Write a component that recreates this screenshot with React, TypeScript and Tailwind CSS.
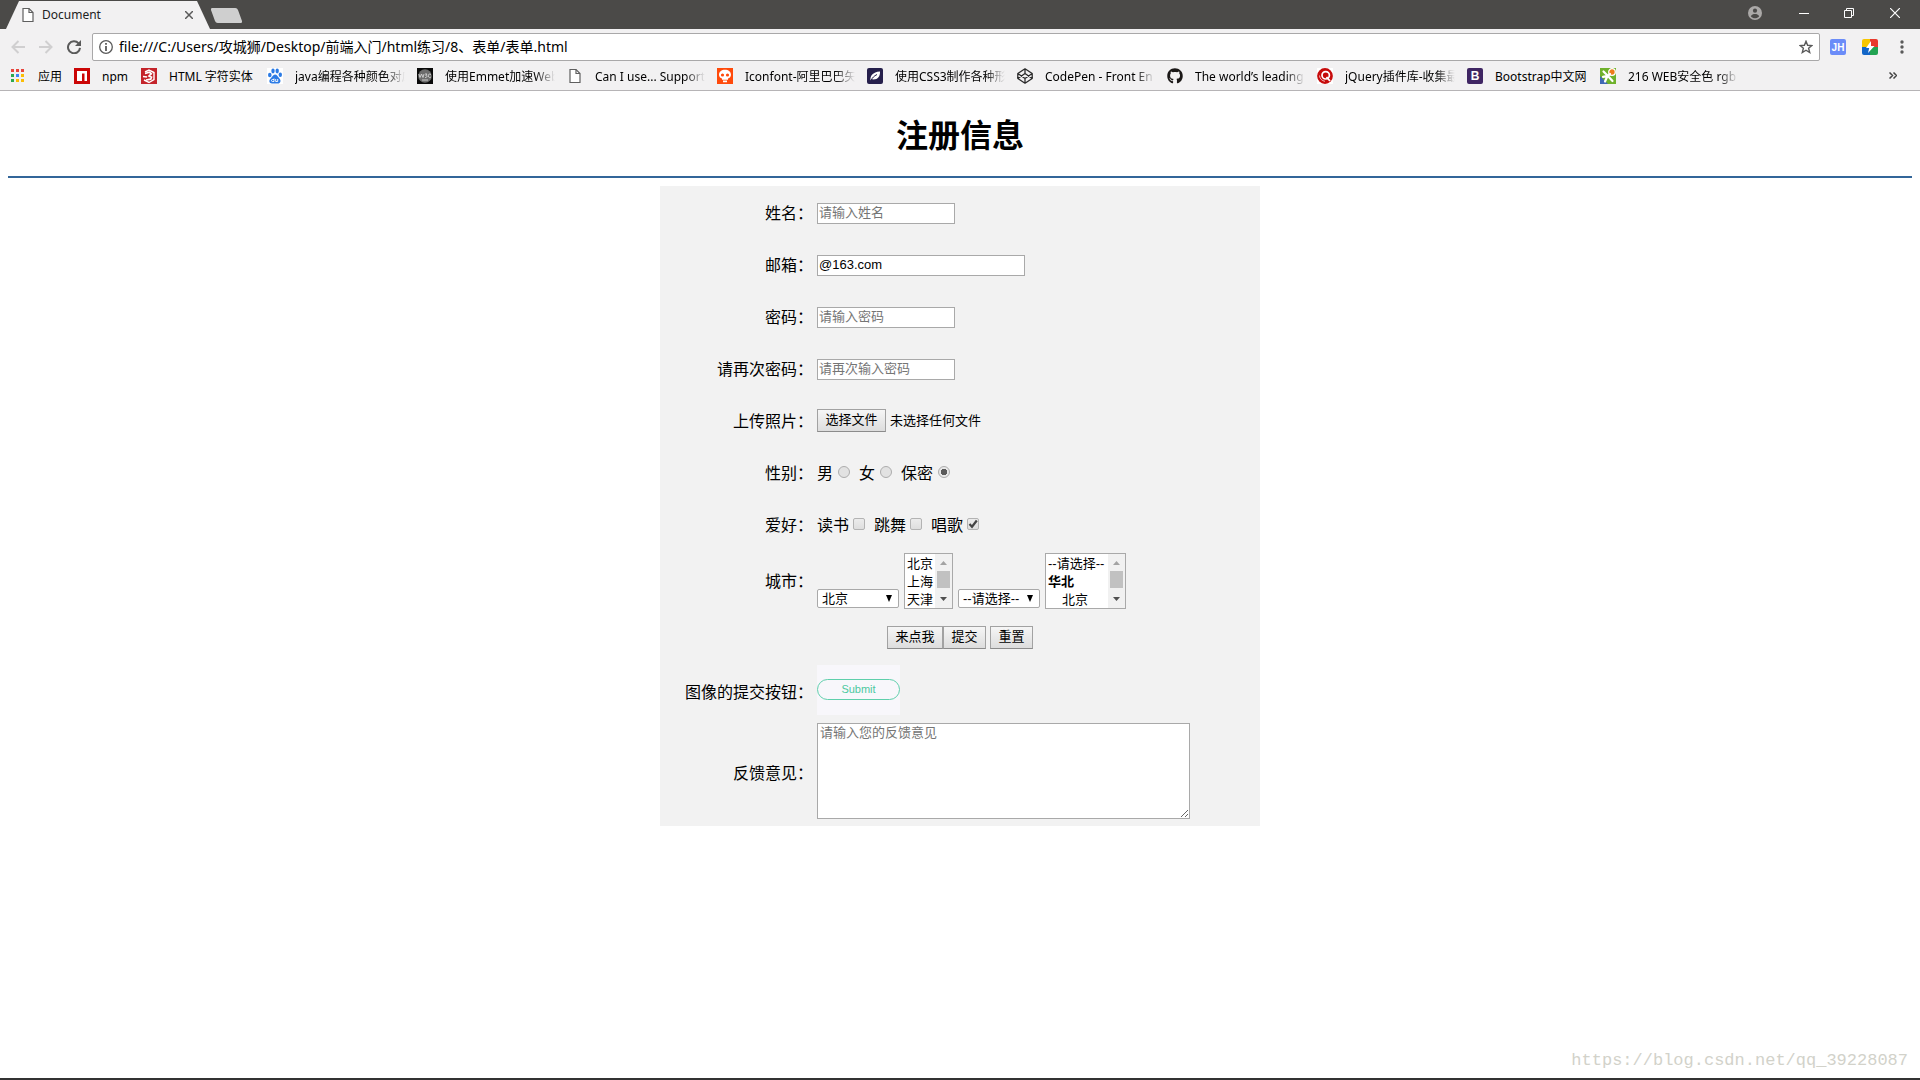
import React from "react";
import { FaGithub } from "react-icons/fa";

const PageIcon = () => (
  <svg width="12" height="16" viewBox="0 0 12 16" fill="none" stroke="#5f5f5f" strokeWidth="1.2">
    <path d="M1 1.5h6l4 4v9H1z" fill="#fff" />
    <path d="M7 1.5v4h4" />
  </svg>
);

const AppsIcon = () => (
  <svg width="13" height="13" viewBox="0 0 13 13">
    <path d="M0 0h3v3H0zM5 0h3v3H5zM10 0h3v3h-3z" fill="#e8453c" />
    <path d="M0 5h3v3H0z" fill="#2da94f" />
    <path d="M5 5h3v3H5z" fill="#3f86f7" />
    <path d="M10 5h3v3h-3z" fill="#fbbd04" />
    <path d="M0 10h3v3H0z" fill="#2da94f" />
    <path d="M5 10h3v3H5zM10 10h3v3h-3z" fill="#fbbd04" />
  </svg>
);

const NpmIcon = () => (
  <svg width="16" height="16" viewBox="0 0 16 16">
    <path d="M0 0h16v16H0z" fill="#cb0606" />
    <path d="M3 3h10v10h-2.500V5.500H8V13H3z" fill="#fff" />
  </svg>
);

const HtmlIcon = () => (
  <svg width="16" height="16" viewBox="0 0 16 16" fill="none">
    <path d="M0 0h16v16H0z" fill="#c4242b" />
    <path d="M4 4l4-2 5 2.500v7L8 14.500 3 12" stroke="#fff" strokeWidth="1.400" />
    <path d="M4 5.500l4.500-1.200 1.800 1.500L8 8l2.500 1.200-.8 2L5 12" stroke="#fff" strokeWidth="1.700" />
    <path d="M2 8.500l4 .5" stroke="#fff" strokeWidth="1.300" />
  </svg>
);

const PawIcon = () => (
  <svg width="16" height="16" viewBox="0 0 16 16">
    <path d="M0 0h16v16H0z" fill="#fff" />
    <g fill="#2c7be5">
      <ellipse cx="2.800" cy="7" rx="1.800" ry="2.300" />
      <ellipse cx="6" cy="3" rx="1.700" ry="2.400" />
      <ellipse cx="10.200" cy="3" rx="1.700" ry="2.400" />
      <ellipse cx="13.300" cy="6.800" rx="1.700" ry="2.200" />
      <path d="M8 6.500c2 0 2.700 2.100 4.300 3.700 2.200 2.300 1.100 5.300-1.300 5.300H5c-2.800 0-3.500-3-1.400-5C5.300 9 6 6.500 8 6.500z" />
    </g>
    <path d="M7 10.500v3H5.500a1 1 0 010-2H7M8.700 11v2.500h2V11" fill="none" stroke="#fff" strokeWidth=".9" />
  </svg>
);

const W3cIcon = () => (
  <svg width="16" height="16" viewBox="0 0 16 16">
    <path d="M0 0h16v16H0z" fill="#0a0a0a" />
    <circle cx="8" cy="8" r="6.800" fill="#6d6d6d" />
    <path d="M1.800 6l1.200 3.500L4.500 6 6 9.500 7 6M8 6h2L8.800 7.500c1.800 0 1.500 2.300-.8 2M14 6.500c-2-1.200-3 .3-2.700 1.600.2 1.600 1.700 1.800 2.700.9M5 12h6" fill="none" stroke="#d5d5d5" strokeWidth=".9" />
  </svg>
);

const IconfontIcon = () => (
  <svg width="16" height="16" viewBox="0 0 16 16">
    <path d="M0 0h16v16H0z" fill="#ff4a0b" />
    <path d="M8 1.800c3.500 0 6 2 6 5 0 2-1.300 3.200-3 3.700v1.300H5v-1.300C3.300 10 2 8.800 2 6.800c0-3 2.500-5 6-5zM6 12.600h4v1.600H6z" fill="#fff" />
    <circle cx="5.500" cy="7" r="1.600" fill="#ff4a0b" />
    <circle cx="10.500" cy="7" r="1.600" fill="#ff4a0b" />
  </svg>
);

const FeatherIcon = () => (
  <svg width="16" height="16" viewBox="0 0 16 16">
    <rect width="16" height="16" rx="2" fill="#251f4b" />
    <path d="M3.500 12.500C3 8 5.500 4 13 3.500c.3 5.500-2.800 8.600-8 7.800z" fill="#fff" />
    <path d="M3.500 13c2-3.500 3.500-5 6.500-6.500" stroke="#251f4b" fill="none" />
  </svg>
);

const CodepenIcon = () => (
  <svg width="16" height="16" viewBox="0 0 16 16" fill="none" stroke="#2b2b2b" strokeWidth="1.300" strokeLinejoin="round">
    <path d="M8 .8l7.200 4.700v5L8 15.200.8 10.500v-5zM8 .8v4.700M8 10.500v4.700M.8 5.500L8 10.500l7.200-5M.8 10.500L8 5.500l7.200 5" />
  </svg>
);

const JqueryIcon = () => (
  <svg width="16" height="16" viewBox="0 0 16 16">
    <path d="M0 0h16v16H0z" fill="#fff" />
    <circle cx="8" cy="8" r="7.900" fill="#c60b0b" />
    <circle cx="8.700" cy="7.300" r="3.700" fill="none" stroke="#fff" strokeWidth="1.700" />
    <path d="M9.500 9l3.500 4" stroke="#fff" strokeWidth="1.800" />
    <path d="M2.500 7.500c.3 3.500 2.500 5.300 5.500 5.800" stroke="#fff" strokeWidth=".7" fill="none" />
  </svg>
);

const BootstrapIcon = () => (
  <span className="flex size-4 items-center justify-center rounded-xs bg-[#3f2563] font-['Liberation_Sans'] text-xs font-bold text-white">B</span>
);

const ColorIcon = () => (
  <svg width="16" height="16" viewBox="0 0 16 16">
    <path d="M0 0h16v16H0z" fill="#6fb12c" />
    <path d="M0 8l8 8H0z" fill="#3f68b5" />
    <circle cx="12" cy="4" r="3.300" fill="#ee7b1a" stroke="#fff" strokeWidth="1.300" />
    <path d="M3.500 3.500L8 8M3 8.800l5-1M8 8l4.500 5M7.500 8L5 13.500M8 8l2-2" fill="none" stroke="#fff" strokeWidth="2.200" strokeLinecap="round" />
  </svg>
);

const bookmarks: { label: string; icon: React.ReactNode; width: string; fade?: boolean }[] = [
  { label: "npm", icon: <NpmIcon />, width: "w-[27px]" },
  { label: "HTML 字符实体", icon: <HtmlIcon />, width: "w-[86px]" },
  { label: "java编程各种颜色对应", icon: <PawIcon />, width: "w-[110px]", fade: true },
  { label: "使用Emmet加速Web", icon: <W3cIcon />, width: "w-[110px]", fade: true },
  { label: "Can I use... Support", icon: <PageIcon />, width: "w-[110px]", fade: true },
  { label: "Iconfont-阿里巴巴矢", icon: <IconfontIcon />, width: "w-[110px]", fade: true },
  { label: "使用CSS3制作各种形", icon: <FeatherIcon />, width: "w-[110px]", fade: true },
  { label: "CodePen - Front En", icon: <CodepenIcon />, width: "w-[110px]", fade: true },
  { label: "The world’s leading", icon: <FaGithub size={16} color="#1b1817" />, width: "w-[110px]", fade: true },
  { label: "jQuery插件库-收集最", icon: <JqueryIcon />, width: "w-[110px]", fade: true },
  { label: "Bootstrap中文网", icon: <BootstrapIcon />, width: "w-[93px]" },
  { label: "216 WEB安全色 rgb", icon: <ColorIcon />, width: "w-[110px]", fade: true },
];

function TabStrip() {
  return (
    <div className="flex h-[29px] items-start bg-[#4b4a48] pl-1.5">
      <div className="mt-px flex h-7 w-[204px] items-center bg-[#f2f1f2] pl-4 pr-[13px] [clip-path:polygon(13px_0,191px_0,100%_100%,0_100%)]">
        <PageIcon />
        <span className="ml-2 flex-1 text-xs text-[#222]">Document</span>
        <button aria-label="关闭标签页" className="flex size-4 items-center justify-center">
          <svg width="8" height="8" viewBox="0 0 8 8" stroke="#5a5a5a" strokeWidth="1.500">
            <path d="M0 0l8 8M8 0L0 8" />
          </svg>
        </button>
      </div>
      <button aria-label="新标签页" className="ml-[3px] mt-2 h-[15px] w-[27px] skew-x-[20deg] rounded-xs bg-[#cfcfcf]" />
      <div className="ml-auto flex h-[26px] items-center pr-5">
        <button aria-label="用户" className="mr-[37px]">
          <svg width="14" height="14" viewBox="0 0 14 14">
            <circle cx="7" cy="7" r="7" fill="#aba9a8" />
            <circle cx="7" cy="4.700" r="2.100" fill="#4b4a48" />
            <path d="M2.800 10.300C3.500 8.600 5.500 8 7 8s3.500.6 4.200 2.300C10 11.700 8.500 12.300 7 12.300s-3-.6-4.200-2z" fill="#4b4a48" />
          </svg>
        </button>
        <button aria-label="最小化" className="mr-[35px]">
          <svg width="10" height="10" viewBox="0 0 10 10" stroke="#fff"><path d="M0 5.500h10" /></svg>
        </button>
        <button aria-label="还原" className="mr-9">
          <svg width="10" height="10" viewBox="0 0 10 10" stroke="#fff" fill="none"><path d="M.5 2.500h7v7h-7zM2.500 2.500v-2h7v7h-2" /></svg>
        </button>
        <button aria-label="关闭">
          <svg width="10" height="10" viewBox="0 0 10 10" stroke="#fff" strokeWidth="1.200"><path d="M0 0l10 10M10 0L0 10" /></svg>
        </button>
      </div>
    </div>
  );
}

function Toolbar() {
  return (
    <div className="flex h-8 items-center pl-[11px] pr-4 pt-1">
      <button aria-label="后退" className="mr-3.5">
        <svg width="14" height="14" viewBox="0 0 14 14" fill="none" stroke="#d0cfd0" strokeWidth="2"><path d="M14 7H2M7.500 1L1.500 7l6 6" /></svg>
      </button>
      <button aria-label="前进" className="mr-3.5">
        <svg width="14" height="14" viewBox="0 0 14 14" fill="none" stroke="#d0cfd0" strokeWidth="2"><path d="M0 7h12M6.500 1l6 6-6 6" /></svg>
      </button>
      <button aria-label="刷新" className="mr-[11px]">
        <svg width="14" height="14" viewBox="0 0 14 14"><path d="M11.600 3.400A6 6 0 1013 7.800" fill="none" stroke="#5a5a5a" strokeWidth="2" /><path d="M14 0v6H8z" fill="#5a5a5a" /></svg>
      </button>
      <div className="flex h-7 flex-1 items-center rounded-xs border border-[#a9a8a9] bg-white px-1.5">
        <svg width="14" height="14" viewBox="0 0 14 14" fill="none" stroke="#5a5a5a"><circle cx="7" cy="7" r="6.300" strokeWidth="1.300" /><path d="M7 6v5M7 3v1.800" strokeWidth="1.800" /></svg>
        <input
          aria-label="地址栏"
          className="ml-1.5 min-w-0 flex-1 text-sm text-black outline-none"
          defaultValue="file:///C:/Users/攻城狮/Desktop/前端入门/html练习/8、表单/表单.html"
        />
        <button aria-label="收藏">
          <svg width="14" height="14" viewBox="0 0 14 14" fill="none" stroke="#5a5a5a" strokeWidth="1.400"><path d="M7 1.300l1.600 4 4.300.3-3.300 2.700 1.100 4.200L7 10.200l-3.700 2.300 1.100-4.200L1.100 5.600l4.300-.3z" /></svg>
        </button>
      </div>
      <button aria-label="JH" className="ml-2.5 flex size-4 items-center justify-center rounded-xs bg-[#6b8cf8] font-['Liberation_Sans'] text-[10px] font-bold text-white">JH</button>
      <button aria-label="扩展" className="ml-4">
        <svg width="16" height="16" viewBox="0 0 16 16">
          <clipPath id="ext"><rect width="16" height="16" rx="2" /></clipPath>
          <g clipPath="url(#ext)">
            <path d="M0 0h8v8H0z" fill="#f7c600" />
            <path d="M8 0h8v8H8z" fill="#e8392d" />
            <path d="M0 8h8v8H0z" fill="#1266c8" />
            <path d="M8 8h8v8H8z" fill="#22a352" />
            <path d="M9 2L4 9h3.200L6 14l6.500-7H9z" fill="#fff" />
          </g>
        </svg>
      </button>
      <button aria-label="菜单" className="ml-[22px]">
        <svg width="4" height="14" viewBox="0 0 4 14" fill="#5a5a5a"><circle cx="2" cy="2" r="1.700" /><circle cx="2" cy="7" r="1.700" /><circle cx="2" cy="12" r="1.700" /></svg>
      </button>
    </div>
  );
}

function BookmarkBar() {
  return (
    <nav className="flex h-[30px] items-center border-b border-[#b6b4b6] pl-[11px] pr-[23px] text-xs text-black">
      <a href="#apps" className="mr-3 flex items-center">
        <AppsIcon />
        <span className="ml-3.5 w-6 pt-0.5">应用</span>
      </a>
      {bookmarks.map((b) => (
        <a key={b.label} href="#bookmark" className="mr-3 flex items-center gap-3">
          <span className="flex w-4 shrink-0 justify-center">{b.icon}</span>
          <span className={`${b.width} overflow-hidden whitespace-nowrap pt-0.5 ${b.fade ? "[mask-image:linear-gradient(to_right,black_82%,transparent)]" : ""}`}>
            {b.label}
          </span>
        </a>
      ))}
      <button aria-label="更多书签" className="ml-auto">
        <svg width="8" height="7" viewBox="0 0 8 7" fill="none" stroke="#444" strokeWidth="1.500"><path d="M.5.5l3 3-3 3M4.500.5l3 3-3 3" /></svg>
      </button>
    </nav>
  );
}

function Row({ label, htmlFor, className = "min-h-[50px]", children }: { label: string; htmlFor?: string; className?: string; children: React.ReactNode }) {
  return (
    <div className={`flex items-center gap-1 ${className}`}>
      {htmlFor ? (
        <label htmlFor={htmlFor} className="w-[153px] shrink-0 pt-0.5 text-right">{label}</label>
      ) : (
        <span className="w-[153px] shrink-0 pt-0.5 text-right">{label}</span>
      )}
      {children}
    </div>
  );
}

const field = "h-[21px] border border-[#a9a9a9] bg-white px-px text-[13px] text-black placeholder:text-[#757575] outline-none";
const pushButton = "h-[23px] border border-[#a2a2a2] border-b-[#8c8c8c] bg-linear-to-b from-[#f6f6f6] to-[#dddddd] text-[13px] leading-5 text-black text-center";

function Radio({ label, checked }: { label: string; checked?: boolean }) {
  return (
    <label className="flex items-center gap-[5px]">
      {label}
      <input
        type="radio"
        name="sex"
        defaultChecked={checked}
        className="mb-1 size-3 appearance-none rounded-full border border-[#adadad] bg-[#e2e2e2] checked:bg-[radial-gradient(circle,#5a5a5a_3px,#e8e8e8_3px)]"
      />
    </label>
  );
}

function Check({ label, checked }: { label: string; checked?: boolean }) {
  return (
    <label className="flex items-center gap-1">
      {label}
      <span className="mb-1 grid size-3">
        <input type="checkbox" defaultChecked={checked} className="peer col-start-1 row-start-1 size-3 appearance-none rounded-xs border border-[#b3b3b3] bg-linear-to-b from-[#ececec] to-[#dedede]" />
        <svg viewBox="0 0 12 12" className="pointer-events-none invisible col-start-1 row-start-1 size-3 peer-checked:visible" fill="none" stroke="#444" strokeWidth="2.200">
          <path d="M2.500 6l2.500 2.700L9.800 2.500" />
        </svg>
      </span>
    </label>
  );
}

function DropDown({ label, children }: { label: string; children: React.ReactNode }) {
  return (
    <span className="mb-px grid">
      <select aria-label={label} className="col-start-1 row-start-1 h-[19px] w-[82px] appearance-none rounded-xs border border-[#a9a9a9] bg-white pl-1 pt-px text-[13px] leading-4 text-black">
        {children}
      </select>
      <svg width="6" height="7" viewBox="0 0 6 7" className="pointer-events-none col-start-1 row-start-1 mr-[7px] mt-1.5 justify-self-end"><path d="M0 0h6L3 7z" /></svg>
    </span>
  );
}

function ListBox({ label, width, children }: { label: string; width: string; children: React.ReactNode }) {
  return (
    <span className={`flex h-14 border border-[#a9a9a9] bg-white ${width}`}>
      <select aria-label={label} size={3} className="h-[54px] min-w-0 flex-1 overflow-hidden bg-white text-[13px] leading-4 text-black outline-none">
        {children}
      </select>
      <span aria-hidden="true" className="flex w-[17px] shrink-0 flex-col items-center bg-[#f1f1f1]">
        <svg width="7" height="4" viewBox="0 0 7 4" className="mb-1.5 mt-[7px]"><path d="M0 4h7L3.500 0z" fill="#a3a3a3" /></svg>
        <span className="h-[17px] w-[13px] bg-[#c1c1c1]" />
        <svg width="7" height="4" viewBox="0 0 7 4" className="mt-[9px]"><path d="M0 0h7L3.500 4z" fill="#505050" /></svg>
      </span>
    </span>
  );
}

const option = "-mt-px mb-px h-[18px] min-h-0 px-0.5 py-0";

function RegisterForm() {
  return (
    <form className="mx-auto flex w-full max-w-[600px] flex-col gap-0.5 bg-[#f2f2f2] pb-0.5 pt-0.5 text-base leading-6" onSubmit={(e) => e.preventDefault()}>
      <Row label="姓名：" htmlFor="name"><input id="name" placeholder="请输入姓名" className={`${field} w-[138px]`} /></Row>
      <Row label="邮箱：" htmlFor="mail"><input id="mail" defaultValue="@163.com" className={`${field} w-[208px]`} /></Row>
      <Row label="密码：" htmlFor="pwd"><input id="pwd" type="password" placeholder="请输入密码" className={`${field} w-[138px]`} /></Row>
      <Row label="请再次密码：" htmlFor="pwd2"><input id="pwd2" type="password" placeholder="请再次输入密码" className={`${field} w-[138px]`} /></Row>
      <Row label="上传照片：">
        <label htmlFor="photo" className={`${pushButton} mb-0.5 w-[69px]`}>选择文件</label>
        <input id="photo" type="file" aria-label="上传照片" className="sr-only" />
        <span className="text-[13px]">未选择任何文件</span>
      </Row>
      <Row label="性别：">
        <div className="flex gap-[9px] pt-0.5">
          <Radio label="男" />
          <Radio label="女" />
          <Radio label="保密" checked />
        </div>
      </Row>
      <Row label="爱好：">
        <div className="flex gap-[9px] pt-0.5">
          <Check label="读书" />
          <Check label="跳舞" />
          <Check label="唱歌" checked />
        </div>
      </Row>
      <Row label="城市：" className="h-[58px]">
        <div className="flex items-end gap-[5px]">
          <DropDown label="城市">
            <option>北京</option>
            <option>上海</option>
            <option>天津</option>
          </DropDown>
          <ListBox label="城市列表" width="w-[49px]">
            <option className={option}>北京</option>
            <option className={option}>上海</option>
            <option className={option}>天津</option>
          </ListBox>
          <DropDown label="地区">
            <option>--请选择--</option>
          </DropDown>
          <ListBox label="地区列表" width="w-[81px]">
            <option className={option}>--请选择--</option>
            <optgroup label="华北" className="-mt-px p-0">
              <option className="-mt-0.5 h-[18px] min-h-0 py-0 pl-4">北京</option>
            </optgroup>
          </ListBox>
        </div>
      </Row>
      <div className="flex min-h-[50px] items-center justify-center">
        <button type="button" className={`${pushButton} w-14`}>来点我</button>
        <button type="submit" className={`${pushButton} w-[43px]`}>提交</button>
        <button type="reset" className={`${pushButton} ml-1 w-[43px]`}>重置</button>
      </div>
      <Row label="图像的提交按钮：" className="h-14">
        <button type="submit" className="mb-1 flex h-[50px] w-[83px] bg-[#f8f7fb] pt-3.5">
          <span className="flex h-[21px] w-full items-center justify-center rounded-full border border-[#5fcfab] font-['Liberation_Sans'] text-[11px] leading-none text-[#4cc9a0]">Submit</span>
        </button>
      </Row>
      <Row label="反馈意见：" htmlFor="feedback" className="min-h-[102px]">
        <textarea id="feedback" placeholder="请输入您的反馈意见" className="mb-1 h-24 w-[373px] resize border border-[#a9a9a9] bg-white px-0.5 py-px text-[13px] leading-4 text-black outline-none placeholder:text-[#757575]" />
      </Row>
    </form>
  );
}

export default function App() {
  return (
    <div className="flex min-h-screen flex-col bg-white font-['Noto_Sans','Noto_Sans_CJK_SC',sans-serif] text-black">
      <header className="bg-[#f2f1f2]">
        <TabStrip />
        <Toolbar />
        <BookmarkBar />
      </header>
      <main className="flex flex-1 flex-col px-2 font-['Liberation_Sans','Noto_Sans_CJK_SC',sans-serif]">
        <h1 className="mb-[18px] mt-[23px] text-center text-[32px] font-bold leading-[44px]">注册信息</h1>
        <hr className="mb-2 border-t-2 border-[#336699]" />
        <RegisterForm />
        <p className="mb-[5px] mt-auto pr-1 text-right font-['Liberation_Mono',monospace] text-[17px] leading-6 text-[#d2d2ca]">https://blog.csdn.net/qq_39228087</p>
      </main>
      <footer className="h-0.5 bg-[#333233]" />
    </div>
  );
}
